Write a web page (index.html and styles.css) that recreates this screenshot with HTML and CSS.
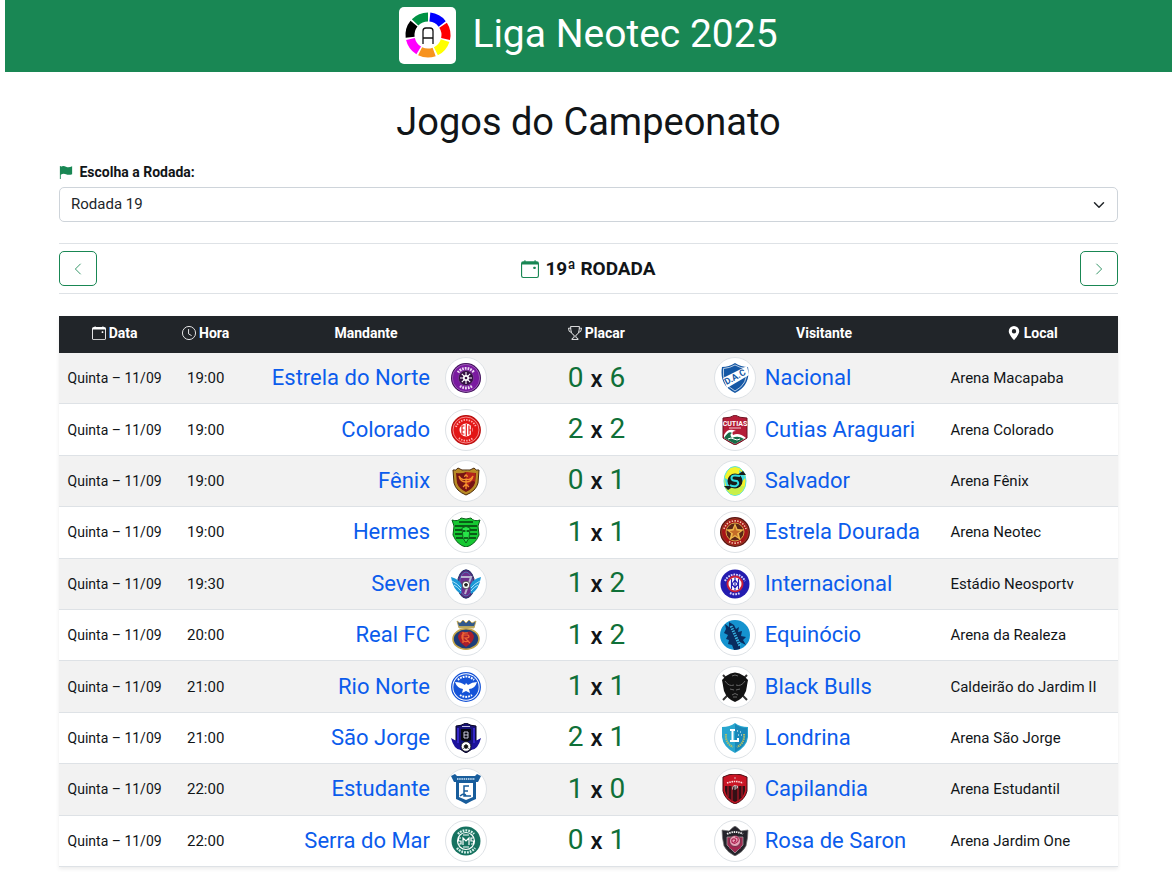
FILE: index.html
```html
<!DOCTYPE html>
<html lang="pt-BR">

<head>
    <meta charset="UTF-8">
    <meta name="viewport" content="width=device-width, initial-scale=1.0">
    <title>Liga Neotec 2025</title>
    <link rel="stylesheet" href="styles.css">
</head>

<body>
    <!-- escudos dos times -->
    <svg class="sprite" aria-hidden="true">
        <symbol id="estrela-norte" viewBox="0 0 30 30">
            <circle cx="15" cy="15" r="15" fill="#3d0a58"/>
            <circle cx="15" cy="15" r="13.7" fill="#7a1aa0" stroke="#b98acb" stroke-width=".6"/>
            <path d="M7 9.500A9.800 9.800 0 0 1 23 9.500M9 23A10 10 0 0 0 21 23" fill="none" stroke="#ecd9f2" stroke-width="2.8" stroke-dasharray="1.7 1"/>
            <circle cx="15" cy="15" r="7.6" fill="#351044" stroke="#8a4aa5" stroke-width=".6"/>
            <path d="M15 9v12M9 15h12M10.8 10.8l8.4 8.4M19.2 10.8l-8.4 8.4" stroke="#fff" stroke-width="1.1"/>
            <circle cx="15" cy="15" r="3" fill="#fff"/>
            <circle cx="15" cy="15" r="1.3" fill="#351044"/>
        </symbol>
        <symbol id="colorado" viewBox="0 0 30 30">
            <circle cx="15" cy="15" r="14.3" fill="#e31515" stroke="#b80c0c" stroke-width="1.2"/>
            <circle cx="15" cy="15" r="13" fill="none" stroke="#fff" stroke-width=".5"/>
            <path d="M5 12A10.6 10.6 0 0 1 25 12M8 23A10.6 10.6 0 0 0 22 23" fill="none" stroke="#ffb0b0" stroke-width="1.8" stroke-dasharray="1.4 1.2"/>
            <circle cx="15" cy="15" r="6.5" fill="#fff"/>
            <path d="M11 10.5v9M11 11h2.4M11 15h2.4M11 19h2.4M15.3 9v12M18 10.5v9M18 15h2.4M20.4 11v8" fill="none" stroke="#e31515" stroke-width="1.2"/>
        </symbol>
        <symbol id="fenix" viewBox="0 0 30 30">
            <path d="M2 4Q5 5 7 2Q11 5 15 4Q19 5 23 2Q25 5 28 4L27 17Q25 25 15 29Q5 25 3 17Z" fill="#b98b25" stroke="#4b2a0c"/>
            <path d="M5 7Q11 8 15 6Q19 8 25 7L24 17Q22 23 15 26Q8 23 6 17Z" fill="#771313"/>
            <path d="M15 6L24.5 7L24 16Q20 12 15 25Z" fill="#b4241a"/>
            <path d="M15 23V13M15 16Q9 16 8 10Q11 15 15 13Q19 15 22 10Q21 16 15 16M12 21L15 18L18 21M13.5 11q1.5-4 3 0" fill="none" stroke="#f5932d" stroke-width="1.3"/>
        </symbol>
        <symbol id="hermes" viewBox="0 0 30 30">
            <path d="M1 3Q7 5 10 1Q15 3 20 1Q23 5 29 3L27 9L28 18Q24 28 15 30Q6 28 2 18L3 9Z" fill="#16c832" stroke="#0b5f1a"/>
            <path d="M4 9H26M4 13H12M18 13H26M4 17H11M19 17H26M5 21H12M18 21H25" stroke="#07370f" stroke-width="1.5"/>
            <path d="M11 11Q15 8 19 11L18 21L15 26L12 21Z" fill="#28e548" stroke="#0a4915" stroke-width=".8"/>
            <path d="M12 14h2.4M15.6 14H18M13 21h4M8 5h14" stroke="#063b0e" stroke-width="1.3"/>
        </symbol>
        <symbol id="seven" viewBox="0 0 30 30">
            <ellipse cx="15" cy="15" rx="8.500" ry="14.2" fill="#5b2374" stroke="#24396f"/>
            <ellipse cx="15" cy="15" rx="6.500" ry="12" fill="#6d2f8c" stroke="#4a86c0" stroke-width=".8"/>
            <path d="M0 8Q8 10 11 16L10 25Q2 21 0 8ZM30 8Q22 10 19 16L20 25Q28 21 30 8Z" fill="#1c98d6"/>
            <path d="M1 12Q7 15 10 19M3 16Q7 18 10 22M29 12Q23 15 20 19M27 16Q23 18 20 22" stroke="#a6e2fa" fill="none"/>
            <path d="M10 8H20L14 25" fill="none" stroke="#b9b4cf" stroke-width="2"/>
            <circle cx="15" cy="16" r="3.8" fill="#fff" stroke="#222" stroke-width=".7"/>
            <path d="M15 13.8l2 1.4-.8 2.3h-2.4l-.8-2.3z" fill="#222"/>
        </symbol>
        <symbol id="real-fc" viewBox="0 0 30 30">
            <path d="M6 1L9 3L12 0L15 3L18 0L21 3L25 1L23 8H8Z" fill="#31588b" stroke="#c4a64b" stroke-width=".8"/>
            <path d="M8 7H23" stroke="#d5b857" stroke-width="1.6"/>
            <ellipse cx="15" cy="19" rx="13" ry="10.2" fill="#1d3c78" stroke="#c4a64b" stroke-width="1.600"/>
            <path d="M15 27Q7 22 7 16Q10 9 15 13Q20 9 23 16Q23 22 15 27Z" fill="#a91e2c"/>
            <path d="M17 13Q10 12 11 18Q12 23 18 21M12 12V23M12 15H17Q20 18 14 18L19 23" fill="none" stroke="#ef6535" stroke-width="1.2"/>
        </symbol>
        <symbol id="rio-norte" viewBox="0 0 30 30">
            <circle cx="15" cy="15" r="14.3" fill="#fff" stroke="#1553d7" stroke-width="1.3"/>
            <circle cx="15" cy="15" r="12.7" fill="#1553d7"/>
            <path d="M7 8A11 11 0 0 1 23 8M9 23A10.5 10.5 0 0 0 21 23" fill="none" stroke="#fff" stroke-width="2" stroke-dasharray="1.8 1"/>
            <path d="M4 10Q10 10 14 13L15 11L17 13Q21 10 26 10Q24 17 18 17L19 21L15 19L11 21L12 17Q6 16 4 10Z" fill="#fff"/>
        </symbol>
        <symbol id="sao-jorge" viewBox="0 0 30 30">
            <path d="M5 3Q10 3 15 0Q20 3 25 3V20Q22 27 15 30Q8 27 5 20Z" fill="#161174" stroke="#070522"/>
            <path d="M0 15Q4 18 8 18L10 27Q3 27 0 15ZM30 15Q26 18 22 18L20 27Q27 27 30 15Z" fill="#1c129c"/>
            <path d="M7 5V20M23 5V20" stroke="#3426c8" stroke-width="2"/>
            <path d="M10 6H20V17L15 19L10 17Z" fill="#080811"/>
            <path d="M13 9h4v3h-4v3h4M13 9v3M17 12v3M11 3.5h8" fill="none" stroke="#dadaf0" stroke-width=".9"/>
            <circle cx="15" cy="23.5" r="4.8" fill="#fff" stroke="#111" stroke-width=".7"/>
            <path d="M15 21.4l2 1.5-.8 2.3h-2.4l-.8-2.3zM11.5 26l1.5-1M18.5 26L17 25" fill="#111" stroke="#111" stroke-width=".7"/>
        </symbol>
        <symbol id="estudante" viewBox="0 0 30 30">
            <path d="M0 2L4 0L6 2H24L26 0L30 2L27 8H25V25Q20 27 15 30Q10 27 5 25V8H3Z" fill="#185d9c"/>
            <path d="M6 5H24" stroke="#d7ecfb" stroke-width="1.7" stroke-dasharray="1.5 .7"/>
            <path d="M8 9H22V23L15 26L8 23Z" fill="#fff"/>
            <path d="M18 12H13V22H20M13 17H17M9 22Q14 18 15 22" fill="none" stroke="#185d9c" stroke-width="1.5"/>
        </symbol>
        <symbol id="serra-mar" viewBox="0 0 30 30">
            <circle cx="15" cy="15" r="14.5" fill="#167260"/>
            <path d="M7 8A10.6 10.6 0 0 1 23 8M6 22A11.4 11.4 0 0 0 24 22" fill="none" stroke="#d5f0e9" stroke-width="2.4" stroke-dasharray="1.8 1"/>
            <circle cx="15" cy="15" r="8.500" fill="#167260" stroke="#fff" stroke-width="1.2"/>
            <path d="M12 19V12L15 15L18 12V19M10 12H7.500V15H10V18H7.500M22.500 12H20V15H22.500V18H20M12 21H18M12 9H18" fill="none" stroke="#fff" stroke-width="1.2"/>
        </symbol>
        <symbol id="nacional" viewBox="0 0 30 30">
            <path d="M2 4Q9 4 15 0Q21 4 28 4Q31 22 15 30Q-1 22 2 4Z" fill="#1558a5"/>
            <path d="M3.5 5.5Q10 5 15 2Q20 5 26.5 5.5Q28.5 21 15 28Q1.5 21 3.5 5.5Z" fill="none" stroke="#fff" stroke-width=".7"/>
            <path d="M3 15L27 3L29 12L7 25Z" fill="#fff"/>
            <text x="15" y="17" font-size="9" font-weight="700" text-anchor="middle" fill="#1558a5" transform="rotate(-29 15 14)">D.A.C</text>
        </symbol>
        <symbol id="cutias" viewBox="0 0 30 30">
            <path d="M3 3Q11 3 15 0Q19 3 27 3V23Q21 27 15 30Q9 27 3 23Z" fill="#b51d38" stroke="#6d1020"/>
            <text x="15" y="11" font-size="7" font-weight="700" text-anchor="middle" fill="#fff">CUTIAS</text>
            <path d="M9 13H21" stroke="#f4cdd4"/>
            <path d="M4 20Q8 12 16 16Q11 16 13 20Q19 17 26 23L15 29L4 23Z" fill="#fff"/>
            <path d="M4 23Q9 15 12 18Q9 19 12 23Q18 20 24 24L15 29Z" fill="#176c47"/>
            <path d="M8 24q3-2 6 0t6 0" fill="none" stroke="#fff"/>
        </symbol>
        <symbol id="salvador" viewBox="0 0 30 30">
            <ellipse cx="15" cy="15" rx="11" ry="14.5" fill="#f4f32b" stroke="#5be3dc" stroke-width="1"/>
            <path d="M5 21Q14 22 18 20L25 20Q20 29 14 29Q8 27 5 21Z" fill="#c8f04a"/>
            <path d="M19 4Q25 8 25 12L21 17ZM5 12L10 15L9 24Q5 20 5 12Z" fill="#3edbe2"/>
            <circle cx="15" cy="15" r="7.5" fill="#171d1b"/>
            <path d="M4 20L14 20L8 24ZM26 9L17 9L23 5Z" fill="#171d1b"/>
            <path d="M20 10Q11 8 11.5 12.5Q12 15 17 15Q20 18 16 20Q13 21 10 19" fill="none" stroke="#31dce0" stroke-width="2"/>
        </symbol>
        <symbol id="estrela-dourada" viewBox="0 0 30 30">
            <circle cx="15" cy="15" r="15" fill="#5c1010"/>
            <circle cx="15" cy="15" r="13.5" fill="#a81518" stroke="#8c5a2b" stroke-width=".6"/>
            <path d="M4 12A11.5 11.5 0 0 1 26 12M9 24.5A11.5 11.5 0 0 0 21 24.5" fill="none" stroke="#efc8a6" stroke-width="1.600" stroke-dasharray="1.5 1.3"/>
            <circle cx="15" cy="15" r="9" fill="#5d2617" stroke="#d3a144"/>
            <path d="M15 6L17.5 12L24 12.5L19 16.5L20.5 23L15 19.5L9.5 23L11 16.5L6 12.5L12.5 12Z" fill="#efb84b"/>
            <path d="M15 9L16.5 13.5L20.5 14L17 16.5L18 20L15 18L12 20L13 16.5L9.5 14L13.5 13.5Z" fill="#c56c28"/>
        </symbol>
        <symbol id="internacional" viewBox="0 0 30 30">
            <circle cx="15" cy="15" r="14.5" fill="#241cb0"/>
            <path d="M5 12A11 11 0 0 1 25 12M10 24A10.500 10.500 0 0 0 20 24" fill="none" stroke="#d9d5ff" stroke-width="2" stroke-dasharray="1.7 1"/>
            <circle cx="15" cy="15" r="8.5" fill="#c91f3a"/>
            <circle cx="15" cy="15" r="6.5" fill="#fff"/>
            <path d="M15 8.5V21.5M11.500 10V20M18.500 10V20M12 15L15 11L18 15L15 19Z" fill="none" stroke="#241cb0" stroke-width="1.2"/>
        </symbol>
        <symbol id="equinocio" viewBox="0 0 30 30">
            <circle cx="15" cy="15" r="15" fill="#1593cf"/>
            <path d="M5 4L9 7L9 2L14 5L16 9L19 7L18 12L22 11L21 16L26 17L23 20L26 25L20 22L20 29Q16 30 14 30L12 25L8 24L9 20L6 19L8 15L4 13L6 9Z" fill="#092d60"/>
            <path d="M11 6L20 26" stroke="#36b1df" stroke-width="3" stroke-dasharray="1.5 1"/>
        </symbol>
        <symbol id="black-bulls" viewBox="0 0 30 30">
            <path d="M3 3L27 28M27 3L3 28" stroke="#333" stroke-width="2"/>
            <path d="M6 4Q15-3 24 4L28 8L26 19Q23 27 15 30Q7 27 4 19L2 8Z" fill="#111"/>
            <path d="M5 9Q9 15 14 13M25 9Q21 15 16 13M10 17L14 18M20 17L16 18M12 23Q15 20 18 23M13 25H17M12 4Q15 2 18 4" fill="none" stroke="#666" stroke-width="1"/>
        </symbol>
        <symbol id="londrina" viewBox="0 0 30 30">
            <path d="M2 4Q10 4 15 0Q20 4 28 4V14Q27 24 15 30Q3 24 2 14Z" fill="#28a6cf"/>
            <path d="M15 1Q20 5 27 5V14Q25 24 15 29Z" fill="#1988b9"/>
            <path d="M6 11Q5 20 13 24M24 11Q25 20 17 24" fill="none" stroke="#b7bf62" stroke-width="2" stroke-dasharray="1.5 .7"/>
            <path d="M10 7H15M12.5 7V18H18V15M10 18H13" fill="none" stroke="#fff" stroke-width="2"/>
            <path d="M17 8h1M20 9h1M18 12h1M21 12h1" stroke="#fff"/>
        </symbol>
        <symbol id="capilandia" viewBox="0 0 30 30">
            <path d="M3 3Q9 0 15 0Q21 0 27 3V17Q25 26 15 30Q5 26 3 17Z" fill="#c91525" stroke="#4a0d12"/>
            <path d="M5 12H25V17Q23 25 15 28Q7 25 5 17Z" fill="#351016"/>
            <path d="M8 12V23M12 12V27M18 12V27M22 12V23" stroke="#961623" stroke-width="1.5"/>
            <path d="M7 9Q15 6 23 9" fill="none" stroke="#ffe1e1" stroke-width="1.6" stroke-dasharray="1.5 .8"/>
            <path d="M14 4h2M15 11.500q-3 0-2.500 4M15 11v5M15 12h2.500v2H15" fill="none" stroke="#ddd" stroke-width=".8"/>
        </symbol>
        <symbol id="rosa-saron" viewBox="0 0 30 30">
            <path d="M2 4L9 5Q13 1 15 0Q17 1 21 5L28 4Q28 12 26 20Q23 26 15 30Q7 26 4 20Q2 12 2 4Z" fill="#24232a" stroke="#777" stroke-width=".7"/>
            <path d="M7 8Q15 4 23 8" fill="none" stroke="#eee" stroke-width="1.8" stroke-dasharray="1.5 .8"/>
            <path d="M7 11L23 11L23 19L15 27L7 19Z" fill="#9c2b51" stroke="#aaa" stroke-width=".7"/>
            <circle cx="15" cy="15" r="5.5" fill="#e7a4b9" stroke="#4d1c30" stroke-width=".7"/>
            <path d="M15 11Q19 11 18 15Q15 19 12 16Q11 12 15 13Q17 15 14 16M9 22L21 22" fill="none" stroke="#ad204f" stroke-width="1.2"/>
        </symbol>
        <symbol id="icone-calendario" viewBox="0 0 16 16">
            <path d="M3.5 0a.5.5 0 0 1 .5.5V1h8V.5a.5.5 0 0 1 1 0V1h1a2 2 0 0 1 2 2v11a2 2 0 0 1-2 2H2a2 2 0 0 1-2-2V3a2 2 0 0 1 2-2h1V.5a.5.5 0 0 1 .5-.5zM1 4v10a1 1 0 0 0 1 1h12a1 1 0 0 0 1-1V4z"/>
            <rect x="11" y="6" width="2" height="2" rx=".5"/>
        </symbol>
    </svg>

    <header class="topo">
        <svg class="logo" viewBox="0 0 57 57" role="img" aria-label="Liga Neotec">
            <g fill="none" stroke-width="9">
                <circle cx="29" cy="28" r="18" pathLength="360" stroke="#0000ff" stroke-dasharray="46 314" transform="rotate(-84 29 28)"/>
                <circle cx="29" cy="28" r="18" pathLength="360" stroke="#ff0000" stroke-dasharray="46 314" transform="rotate(-33 29 28)"/>
                <circle cx="29" cy="28" r="18" pathLength="360" stroke="#ffff00" stroke-dasharray="46 314" transform="rotate(18 29 28)"/>
                <circle cx="29" cy="28" r="18" pathLength="360" stroke="#f7931e" stroke-dasharray="46 314" transform="rotate(70 29 28)"/>
                <circle cx="29" cy="28" r="18" pathLength="360" stroke="#ff00ff" stroke-dasharray="46 314" transform="rotate(121 29 28)"/>
                <circle cx="29" cy="28" r="18" pathLength="360" stroke="#000" stroke-dasharray="46 314" transform="rotate(173 29 28)"/>
                <circle cx="29" cy="28" r="18" pathLength="360" stroke="#009245" stroke-dasharray="46 314" transform="rotate(224 29 28)"/>
            </g>
            <!-- monograma da liga -->
            <path d="M24 37V24q0-3 3-3h4q3 0 3 3v13M24 31h10" fill="none" stroke="#111" stroke-width="1.3"/>
        </svg>
        <span class="nome-liga">Liga Neotec 2025</span>
    </header>

    <main class="conteudo">
        <h1>Jogos do Campeonato</h1>

        <label class="rotulo" for="rodada">
            <svg viewBox="0 0 16 16" class="icone verde"><path d="M1 1h1v1q3-1.500 6 0t7-.5v9q-4 1.500-7 0t-6 .5v5H1z"/></svg>
            Escolha a Rodada:
        </label>
        <div class="seletor">
            <select id="rodada">
                <option>Rodada 19</option>
            </select>
            <svg viewBox="0 0 16 16" class="seta"><path d="M2 5l6 6 6-6" fill="none" stroke="#212529" stroke-width="2" stroke-linecap="round" stroke-linejoin="round"/></svg>
        </div>

        <div class="navegacao">
            <button type="button" aria-label="Rodada anterior"><svg viewBox="0 0 16 16"><path d="M11 2L5 8l6 6"/></svg></button>
            <h2><svg class="verde"><use href="#icone-calendario"/></svg>19ª RODADA</h2>
            <button type="button" aria-label="Próxima rodada"><svg viewBox="0 0 16 16"><path d="M5 2l6 6-6 6"/></svg></button>
        </div>

        <table class="jogos">
            <thead>
                <tr>
                    <th class="col-data"><svg class="icone"><use href="#icone-calendario"/></svg>Data</th>
                    <th class="col-hora"><svg class="icone" viewBox="0 0 16 16"><path d="M8 .5a7.5 7.5 0 1 0 0 15a7.5 7.5 0 1 0 0-15M7.5 3.5V9l3.5 2" fill="none" stroke="currentColor"/></svg>Hora</th>
                    <th class="col-mandante">Mandante</th>
                    <th class="col-placar"><svg class="icone" viewBox="0 0 16 16"><path d="M3 .5h10q0 9-4 10v2.5l2.5 1.500v1h-7v-1L7 13v-2.5Q3 9.5 3 .5zM3 2.5H.5Q.5 7 4 7.5M13 2.5h2.5Q15.5 7 12 7.5" fill="none" stroke="currentColor"/></svg>Placar</th>
                    <th class="col-visitante">Visitante</th>
                    <th class="col-local"><svg class="icone" viewBox="0 0 16 16"><path fill-rule="evenodd" d="M8 16S2 10 2 6a6 6 0 1 1 12 0c0 4-6 10-6 10zM8 8.500a2.500 2.500 0 1 0 0-5a2.500 2.500 0 0 0 0 5z"/></svg>Local</th>
                </tr>
            </thead>
            <tbody></tbody>
        </table>
    </main>
    <script src="script.js"></script>
</body>

</html>
```
FILE: styles.css
```css
* {
    margin: 0;
    padding: 0;
    box-sizing: border-box;
}
body {
    margin: 0 4px 0 5px;
    background: #fff;
    color: #111518;
    font-family: Roboto, "Liberation Sans", sans-serif;
    font-size: 14px;
    line-height: 20px;
}
svg {
    fill: currentColor;
}
.sprite {
    display: none;
}
.verde {
    color: #198754;
}
.icone {
    width: 14px;
    height: 14px;
    vertical-align: -2px;
    margin-right: 3px;
}

/* topo */
.topo {
    display: flex;
    align-items: center;
    justify-content: center;
    gap: 16px;
    height: 72px;
    padding-bottom: 1px;
    background: #198754;
    color: #fff;
}
.logo {
    width: 57px;
    height: 57px;
    border-radius: 5px;
    background: #fff;
}
.nome-liga {
    font-size: 39px;
    line-height: 48px;
    padding-bottom: 4px;
}

/* conteudo */
.conteudo {
    padding: 26px 54px 16px;
}
.conteudo h1 {
    font-size: 38px;
    line-height: 48px;
    font-weight: 400;
    text-align: center;
    margin-bottom: 16px;
}
.rotulo {
    display: block;
    font-weight: 700;
    margin-bottom: 5px;
}
.seletor {
    position: relative;
    margin-bottom: 21px;
}
.seletor select {
    display: block;
    appearance: none;
    width: 100%;
    height: 35px;
    padding: 0 11px 2px;
    border: 1px solid #ced4da;
    border-radius: 5px;
    background: #fff;
    color: #212529;
    font-family: inherit;
    font-size: 15px;
}
.seta {
    position: absolute;
    right: 13px;
    top: 12px;
    width: 12px;
    height: 12px;
    pointer-events: none;
}
.navegacao {
    display: flex;
    align-items: center;
    justify-content: space-between;
    padding: 7px 0;
    margin-bottom: 22px;
    border-top: 1px solid #dee2e6;
    border-bottom: 1px solid #dee2e6;
}
.navegacao button {
    width: 38px;
    height: 35px;
    border: 1px solid #198754;
    border-radius: 5px;
    background: #fff;
    cursor: pointer;
}
.navegacao button svg {
    display: block;
    width: 14px;
    height: 14px;
    margin: 0 auto;
    fill: none;
    stroke: #198754;
}
.navegacao h2 {
    display: flex;
    align-items: center;
    gap: 6px;
    font-size: 19px;
    line-height: 24px;
}
.navegacao h2 svg {
    width: 18px;
    height: 18px;
}

/* tabela de jogos */
.jogos {
    width: 100%;
    height: 551px;
    table-layout: fixed;
    border-collapse: collapse;
    box-shadow: 0 2px 4px rgba(0, 0, 0, .08);
}
.jogos th {
    height: 37px;
    padding-bottom: 3px;
    background: #212529;
    color: #fff;
}
.jogos td {
    padding: 4px;
    border-bottom: 1px solid #dee2e6;
    text-align: center;
}
.jogos tbody tr:nth-child(odd) {
    background: #f2f2f2;
}
.col-data {
    width: 10.5%;
}
.col-hora {
    width: 6.7%;
}
.col-mandante {
    width: 23.6%;
}
.col-placar {
    width: 19.9%;
}
.col-visitante {
    width: 23.1%;
}
.jogos .hora,
.jogos .local {
    font-size: 15px;
}
.jogos .local {
    padding-right: 0;
    text-align: left;
}
.time {
    display: flex;
    align-items: center;
    gap: 15px;
    color: #0b5cec;
    font-size: 22px;
    line-height: 28px;
    text-decoration: none;
}
.time.mandante {
    justify-content: flex-end;
}
.time.visitante {
    gap: 9px;
    padding-left: 8px;
}
.escudo {
    display: flex;
    align-items: center;
    justify-content: center;
    width: 42px;
    height: 42px;
    border: 1px solid #dee2e6;
    border-radius: 50%;
    background: #fff;
}
.escudo svg {
    width: 30px;
    height: 30px;
}
.jogos .placar {
    color: #0f7038;
    font-size: 28px;
    line-height: 32px;
}
.placar span {
    color: #111518;
    font-size: 24px;
    font-weight: 500;
}
```
FILE: script.js
```js
var oBody = document.querySelector('.jogos tbody');

// data, hora, mandante, escudo, gols, gols, visitante, escudo, local
var jogos = [
    ['Quinta – 11/09', '19:00', 'Estrela do Norte', 'estrela-norte', 0, 6, 'Nacional', 'nacional', 'Arena Macapaba'],
    ['Quinta – 11/09', '19:00', 'Colorado', 'colorado', 2, 2, 'Cutias Araguari', 'cutias', 'Arena Colorado'],
    ['Quinta – 11/09', '19:00', 'Fênix', 'fenix', 0, 1, 'Salvador', 'salvador', 'Arena Fênix'],
    ['Quinta – 11/09', '19:00', 'Hermes', 'hermes', 1, 1, 'Estrela Dourada', 'estrela-dourada', 'Arena Neotec'],
    ['Quinta – 11/09', '19:30', 'Seven', 'seven', 1, 2, 'Internacional', 'internacional', 'Estádio Neosportv'],
    ['Quinta – 11/09', '20:00', 'Real FC', 'real-fc', 1, 2, 'Equinócio', 'equinocio', 'Arena da Realeza'],
    ['Quinta – 11/09', '21:00', 'Rio Norte', 'rio-norte', 1, 1, 'Black Bulls', 'black-bulls', 'Caldeirão do Jardim II'],
    ['Quinta – 11/09', '21:00', 'São Jorge', 'sao-jorge', 2, 1, 'Londrina', 'londrina', 'Arena São Jorge'],
    ['Quinta – 11/09', '22:00', 'Estudante', 'estudante', 1, 0, 'Capilandia', 'capilandia', 'Arena Estudantil'],
    ['Quinta – 11/09', '22:00', 'Serra do Mar', 'serra-mar', 0, 1, 'Rosa de Saron', 'rosa-saron', 'Arena Jardim One']
];

var str = '';
for (var i = 0; i < jogos.length; i++) {
    var j = jogos[i];
    str += `<tr>
        <td>${j[0]}</td>
        <td class="hora">${j[1]}</td>
        <td><a href="#${j[3]}" class="time mandante">${j[2]}<span class="escudo"><svg><use href="#${j[3]}"/></svg></span></a></td>
        <td class="placar">${j[4]} <span>x</span> ${j[5]}</td>
        <td><a href="#${j[7]}" class="time visitante"><span class="escudo"><svg><use href="#${j[7]}"/></svg></span>${j[6]}</a></td>
        <td class="local">${j[8]}</td>
    </tr>`;
}
oBody.innerHTML = str;
```
